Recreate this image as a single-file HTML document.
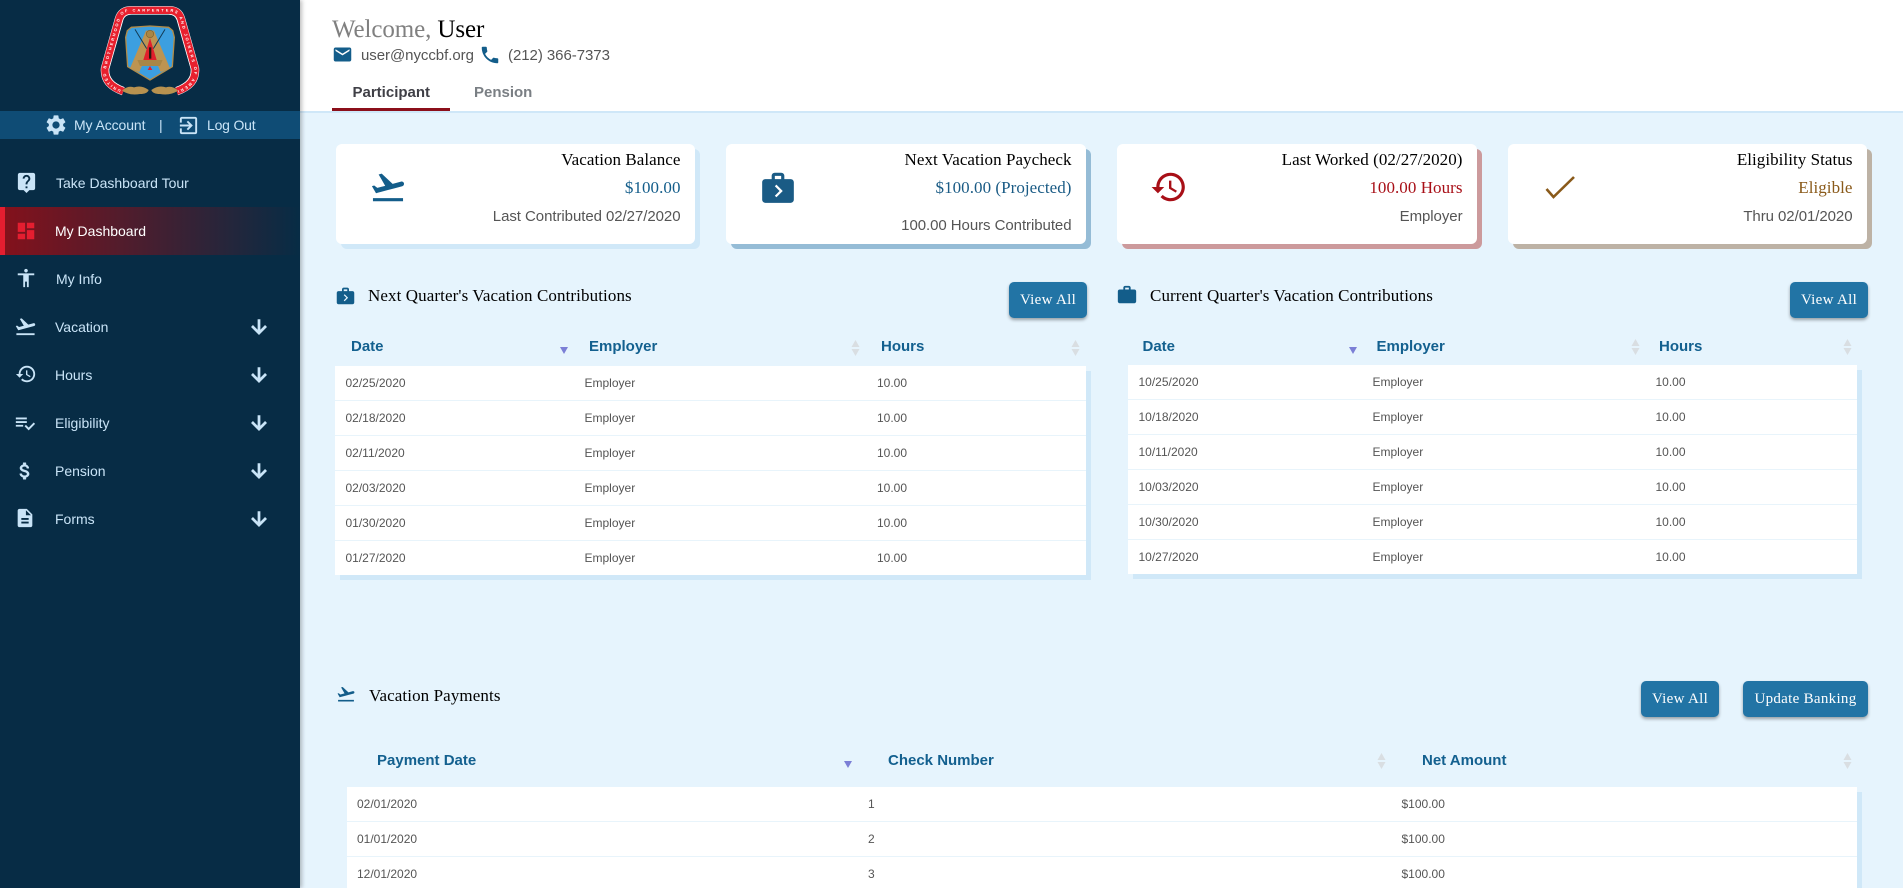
<!DOCTYPE html>
<html lang="en"><head><meta charset="utf-8"><title>Dashboard</title>
<style>
html,body{margin:0;padding:0;width:1903px;height:888px;overflow:hidden;background:#e6f4fd}
body{position:relative;font-family:"Liberation Sans",sans-serif}
.a,svg.i,.t,.r,.b,.th,.td{position:absolute}
svg.i{fill:currentColor;display:block}
.t{white-space:nowrap}
#side{position:absolute;left:0;top:0;width:300px;height:888px;background:#072c45;box-shadow:2px 0 4px rgba(0,0,0,.25);z-index:2}
.m{position:absolute;white-space:nowrap;font-size:14px;line-height:20px;color:#c9e4f7}
.s{color:#c9e4f7}
#head{position:absolute;left:300px;top:0;width:1603px;height:111px;background:#fff;border-bottom:2px solid #cfe7f8}
.card{position:absolute;top:144px;width:360px;height:100px;background:#fff;border-radius:6px}
.l1,.l2,.l3{position:absolute;right:14.5px;white-space:nowrap;line-height:20px}
.l1{top:6px;font:17px/20px "Liberation Serif",serif;letter-spacing:.05px;color:#000}
.l2{top:34px;font:17px/20px "Liberation Serif",serif;letter-spacing:.05px}
.l3{top:63px;font-size:15px;letter-spacing:-.06px;color:#555}
.sec{position:absolute;white-space:nowrap;font:17px/20px "Liberation Serif",serif;letter-spacing:.1px;color:#000}
.b{background:#2274a5;color:#fff;border-radius:5px;height:36px;line-height:36px;text-align:center;font:15px/36px "Liberation Serif",serif;letter-spacing:.3px;box-shadow:0 2px 3px rgba(0,0,0,.35)}
.th{white-space:nowrap;font-weight:700;font-size:15px;line-height:20px;color:#13608f}
.td{white-space:nowrap;font-size:12px;line-height:16px;color:#555}
.rowbox{position:absolute;background:#fff;box-shadow:5px 5px 0 #d0e8f8}
.ln{position:absolute;left:0;right:0;height:1px;background:#e8f4fb}
.so{position:absolute;width:9px;height:16px}
.de{position:absolute;width:0;height:0;border-left:4px solid transparent;border-right:4px solid transparent;border-top:7px solid #7b7fd6}
</style></head><body>

<div id="side">
<svg class="a" style="left:0;top:0" width="300" height="111" viewBox="0 0 900 333">
<defs><path id="ringp" d="M98 276 C60 262 40 240 44 205 L86 56 Q94 31 122 31 L238 31 Q266 31 274 56 L316 205 C320 240 300 262 262 276"/></defs>
<g transform="translate(270 0)">
<path d="M100 274 C62 260 42 240 45 205 L87 56 Q95 31 122 31 L238 31 Q265 31 273 56 L315 205 C318 240 298 260 260 274" fill="none" stroke="#fff" stroke-width="25"/>
<path d="M100 274 C62 260 42 240 45 205 L87 56 Q95 31 122 31 L238 31 Q265 31 273 56 L315 205 C318 240 298 260 260 274" fill="none" stroke="#e8202e" stroke-width="22"/>
<path d="M102 262 C72 250 55 234 57 207 L99 60 Q105 43 124 43 L236 43 Q255 43 261 60 L303 207 C305 234 288 250 258 262" fill="none" stroke="#fff" stroke-width="2"/>
<text font-family="Liberation Sans,sans-serif" font-size="12" font-weight="700" fill="#fff" dy="4"><textPath href="#ringp" startOffset="1%" textLength="735">UNITED BROTHERHOOD OF CARPENTERS AND JOINERS OF AMERICA</textPath></text>
<path d="M112 92 L124 82 L180 78 L236 82 L248 92 L253 112 L247 200 L180 240 L113 200 L107 112Z" fill="#3c9fe0" stroke="#b28c48" stroke-width="4"/>
<path d="M168 92 L192 92 L240 205 L212 216 L180 142 L148 216 L120 205Z" fill="#bd9452"/>
<path d="M135 88 L170 146M225 88 L190 146" stroke="#123a55" stroke-width="3"/>
<circle cx="180" cy="102" r="11" fill="#a98646" stroke="#7c6230" stroke-width="2"/>
<path d="M180 114 L200 180 L160 180Z" fill="#e01f2c"/>
<path d="M177 142 H184 V176 H177Z" fill="#2a1a10"/>
<path d="M142 180 L218 180 L210 198 L150 198Z" fill="#a98646"/>
<path d="M180 198 L187 210 L173 210Z" fill="#e01f2c"/>
<path d="M96 272 Q112 256 132 262 Q155 254 176 270 Q172 282 150 282 Q120 288 96 272ZM184 270 Q205 254 228 262 Q248 256 264 272 Q240 288 210 282 Q188 282 184 270Z" fill="#b8924f"/>
</g>
</svg>
<div class="a" style="left:0;top:111px;width:300px;height:28px;background:#0f4c75"></div>
<svg class="i s" style="left:44px;top:113px" width="24" height="24" viewBox="0 0 24 24"><path d="M19.14 12.94c.04-.3.06-.61.06-.94 0-.32-.02-.64-.07-.94l2.03-1.58c.18-.14.23-.41.12-.61l-1.92-3.32c-.12-.22-.37-.29-.59-.22l-2.39.96c-.5-.38-1.03-.7-1.62-.94l-.36-2.54c-.04-.24-.24-.41-.48-.41h-3.84c-.24 0-.43.17-.47.41l-.36 2.54c-.59.24-1.13.57-1.62.94l-2.39-.96c-.22-.08-.47 0-.59.22L2.74 8.87c-.12.21-.08.47.12.61l2.03 1.58c-.05.3-.09.63-.09.94s.02.64.07.94l-2.03 1.58c-.18.14-.23.41-.12.61l1.92 3.32c.12.22.37.29.59.22l2.39-.96c.5.38 1.03.7 1.62.94l.36 2.54c.05.24.24.41.48.41h3.84c.24 0 .44-.17.47-.41l.36-2.54c.59-.24 1.13-.56 1.62-.94l2.39.96c.22.08.47 0 .59-.22l1.92-3.32c.12-.22.07-.47-.12-.61l-2.01-1.58zM12 15.6c-1.98 0-3.6-1.62-3.6-3.6s1.62-3.6 3.6-3.6 3.6 1.62 3.6 3.6-1.62 3.6-3.6 3.6z"/></svg>
<div class="m" style="left:74px;top:115px;letter-spacing:-.1px">My Account</div>
<div class="m" style="left:159px;top:115px">|</div>
<svg class="i s" style="left:177px;top:114px" width="23" height="23" viewBox="0 0 24 24"><path d="M10.09 15.59L11.5 17l5-5-5-5-1.41 1.41L12.67 11H3v2h9.67l-2.58 2.59zM19 3H5c-1.11 0-2 .9-2 2v4h2V5h14v14H5v-4H3v4c0 1.1.89 2 2 2h14c1.1 0 2-.9 2-2V5c0-1.1-.9-2-2-2z"/></svg>
<div class="m" style="left:207px;top:115px;letter-spacing:-.2px">Log Out</div>

<svg class="i s" style="left:15px;top:171px" width="23" height="23" viewBox="0 0 24 24"><path d="M19 2H5c-1.11 0-2 .9-2 2v14c0 1.1.89 2 2 2h4l3 3 3-3h4c1.1 0 2-.9 2-2V4c0-1.1-.9-2-2-2zm-6 16h-2v-2h2v2zm2.07-7.75l-.9.92C13.45 11.9 13 12.5 13 14h-2v-.5c0-1.1.45-2.1 1.17-2.83l1.24-1.26c.37-.36.59-.86.59-1.41 0-1.1-.9-2-2-2s-2 .9-2 2H8c0-2.21 1.79-4 4-4s4 1.79 4 4c0 .88-.36 1.68-.93 2.25z"/></svg>
<div class="m" style="left:56px;top:173px">Take Dashboard Tour</div>

<div class="a" style="left:0;top:207px;width:300px;height:48px;background:linear-gradient(90deg,#85111b,#072c45)"></div>
<div class="a" style="left:0;top:207px;width:5px;height:48px;background:#e41e30"></div>
<svg class="i" style="left:15px;top:220px;color:#e41e30" width="22" height="22" viewBox="0 0 24 24"><path d="M3 13h8V3H3v10zm0 8h8v-6H3v6zm10 0h8V11h-8v10zm0-18v6h8V3h-8z"/></svg>
<div class="m" style="left:55px;top:221px;color:#fff">My Dashboard</div>

<svg class="i s" style="left:15px;top:267px" width="22" height="22" viewBox="0 0 24 24"><path d="M12 2c1.1 0 2 .9 2 2s-.9 2-2 2-2-.9-2-2 .9-2 2-2zm9 7h-6v13h-2v-6h-2v6H9V9H3V7h18v2z"/></svg>
<div class="m" style="left:56px;top:269px">My Info</div>

<svg class="i s" style="left:14px;top:315px" width="23" height="23" viewBox="0 0 24 24"><path d="M2.5 19h19v2h-19zm19.57-9.36c-.21-.8-1.04-1.28-1.84-1.06L14.92 10l-6.9-6.43-1.93.51 4.14 7.17-4.97 1.33-1.97-1.54-1.45.39 1.82 3.16.77 1.33 1.6-.43 5.31-1.42 4.35-1.16L21 11.49c.81-.23 1.28-1.05 1.07-1.85z"/></svg>
<div class="m" style="left:55px;top:317px">Vacation</div>
<svg class="i s" style="left:248px;top:316px" width="22" height="22" viewBox="0 0 24 24"><path stroke="currentColor" stroke-width="1" d="M20 12l-1.41-1.41L13 16.17V4h-2v12.17l-5.58-5.59L4 12l8 8 8-8z"/></svg>

<svg class="i s" style="left:15px;top:363px" width="22" height="22" viewBox="0 0 24 24"><path d="M13 3c-4.97 0-9 4.03-9 9H1l3.89 3.89.07.14L9 12H6c0-3.87 3.13-7 7-7s7 3.13 7 7-3.13 7-7 7c-1.93 0-3.68-.79-4.94-2.06l-1.42 1.42C8.27 19.99 10.51 21 13 21c4.97 0 9-4.03 9-9s-4.03-9-9-9zm-1 5v5l4.28 2.54.72-1.21-3.5-2.08V8H12z"/></svg>
<div class="m" style="left:55px;top:365px">Hours</div>
<svg class="i s" style="left:248px;top:364px" width="22" height="22" viewBox="0 0 24 24"><path stroke="currentColor" stroke-width="1" d="M20 12l-1.41-1.41L13 16.17V4h-2v12.17l-5.58-5.59L4 12l8 8 8-8z"/></svg>

<svg class="i s" style="left:14px;top:412px" width="22" height="22" viewBox="0 0 24 24"><path d="M14 10H2v2h12v-2zm0-4H2v2h12V6zM2 16h8v-2H2v2zm19.5-4.5L23 13l-6.99 7-4.51-4.5L13 14l3.01 3 5.49-5.5z"/></svg>
<div class="m" style="left:55px;top:413px">Eligibility</div>
<svg class="i s" style="left:248px;top:412px" width="22" height="22" viewBox="0 0 24 24"><path stroke="currentColor" stroke-width="1" d="M20 12l-1.41-1.41L13 16.17V4h-2v12.17l-5.58-5.59L4 12l8 8 8-8z"/></svg>

<svg class="i s" style="left:14px;top:460px" width="22" height="22" viewBox="0 0 24 24"><path stroke="currentColor" stroke-width=".5" d="M11.8 10.9c-2.27-.59-3-1.2-3-2.15 0-1.09 1.01-1.85 2.7-1.85 1.78 0 2.44.85 2.5 2.1h2.21c-.07-1.72-1.12-3.3-3.21-3.81V3h-3v2.16c-1.94.42-3.5 1.68-3.5 3.61 0 2.31 1.91 3.46 4.7 4.13 2.5.6 3 1.48 3 2.41 0 .69-.49 1.79-2.7 1.79-2.06 0-2.87-.92-2.98-2.1h-2.2c.12 2.19 1.76 3.42 3.68 3.83V21h3v-2.15c1.95-.37 3.5-1.5 3.5-3.55 0-2.84-2.43-3.81-4.7-4.4z"/></svg>
<div class="m" style="left:55px;top:461px">Pension</div>
<svg class="i s" style="left:248px;top:460px" width="22" height="22" viewBox="0 0 24 24"><path stroke="currentColor" stroke-width="1" d="M20 12l-1.41-1.41L13 16.17V4h-2v12.17l-5.58-5.59L4 12l8 8 8-8z"/></svg>

<svg class="i s" style="left:14px;top:507px" width="22" height="22" viewBox="0 0 24 24"><path d="M14 2H6c-1.1 0-1.99.9-1.99 2L4 20c0 1.1.89 2 1.99 2H18c1.1 0 2-.9 2-2V8l-6-6zm2 16H8v-2h8v2zm0-4H8v-2h8v2zm-3-5V3.5L18.5 9H13z"/></svg>
<div class="m" style="left:55px;top:509px">Forms</div>
<svg class="i s" style="left:248px;top:508px" width="22" height="22" viewBox="0 0 24 24"><path stroke="currentColor" stroke-width="1" d="M20 12l-1.41-1.41L13 16.17V4h-2v12.17l-5.58-5.59L4 12l8 8 8-8z"/></svg>
</div>

<div id="head">
<div class="t" style="left:32px;top:15px;font:25px/30px 'Liberation Serif',serif;letter-spacing:-.1px;color:#808080">Welcome, <span style="color:#000">User</span></div>
<svg class="i" style="left:32px;top:43.5px;color:#135d8a" width="21" height="21" viewBox="0 0 24 24"><path d="M20 4H4c-1.1 0-1.99.9-1.99 2L2 18c0 1.1.9 2 2 2h16c1.1 0 2-.9 2-2V6c0-1.1-.9-2-2-2zm0 4l-8 5-8-5V6l8 5 8-5v2z"/></svg>
<div class="t" style="left:61px;top:46px;font-size:15px;line-height:20px;letter-spacing:-.05px;color:#555">user@nyccbf.org</div>
<svg class="i" style="left:178.5px;top:44px;color:#135d8a" width="22" height="22" viewBox="0 0 24 24"><path d="M6.62 10.79c1.44 2.83 3.76 5.14 6.59 6.59l2.2-2.2c.27-.27.67-.36 1.02-.24 1.12.37 2.33.57 3.57.57.55 0 1 .45 1 1V20c0 .55-.45 1-1 1-9.39 0-17-7.61-17-17 0-.55.45-1 1-1h3.5c.55 0 1 .45 1 1 0 1.25.2 2.45.57 3.57.11.35.03.74-.25 1.02l-2.2 2.2z"/></svg>
<div class="t" style="left:208px;top:46px;font-size:15px;line-height:20px;letter-spacing:-.05px;color:#555">(212) 366-7373</div>
<div class="t" style="left:52.5px;top:82.5px;font-weight:700;font-size:15px;line-height:20px;color:#3f3f46">Participant</div>
<div class="t" style="left:174px;top:82.5px;font-weight:700;font-size:15px;line-height:20px;color:#7a7f84">Pension</div>
<div class="a" style="left:32px;top:108px;width:118px;height:3px;background:#8b0f1a"></div>
</div>

<!-- cards -->
<div class="card" style="left:336px;width:359px;box-shadow:5px 5px 0 #d0e8f8">
<svg class="i" style="left:33px;top:24px;color:#135d8a" width="38" height="38" viewBox="0 0 24 24"><path d="M2.5 19h19v2h-19zm19.57-9.36c-.21-.8-1.04-1.28-1.84-1.06L14.92 10l-6.9-6.43-1.93.51 4.14 7.17-4.97 1.33-1.97-1.54-1.45.39 1.82 3.16.77 1.33 1.6-.43 5.31-1.42 4.35-1.16L21 11.49c.81-.23 1.28-1.05 1.07-1.85z"/></svg>
<div class="l1">Vacation Balance</div><div class="l2" style="color:#135d8a">$100.00</div><div class="l3">Last Contributed 02/27/2020</div>
</div>
<div class="card" style="left:726px;box-shadow:5px 5px 0 #95bcd6">
<svg class="i" style="left:33px;top:24px;color:#1a5b85" width="38" height="38" viewBox="0 0 24 24"><path d="M20 7h-4V5c0-.55-.22-1.05-.59-1.41C15.05 3.22 14.55 3 14 3h-4c-1.1 0-2 .9-2 2v2H4c-1.1 0-2 .9-2 2v11c0 1.1.9 2 2 2h16c1.1 0 2-.9 2-2V9c0-1.1-.9-2-2-2zM10 5h4v2h-4V5zm1 13.5l-1-1 3-3-3-3 1-1 4 4-4 4z"/></svg>
<div class="l1">Next Vacation Paycheck</div><div class="l2" style="color:#1a5b85">$100.00 (Projected)</div><div class="l3" style="top:72px">100.00 Hours Contributed</div>
</div>
<div class="card" style="left:1117px;box-shadow:5px 5px 0 #cc9a9c">
<svg class="i" style="left:33px;top:24px;color:#a80f17" width="38" height="38" viewBox="0 0 24 24"><path d="M13 3c-4.97 0-9 4.03-9 9H1l3.89 3.89.07.14L9 12H6c0-3.87 3.13-7 7-7s7 3.13 7 7-3.13 7-7 7c-1.93 0-3.68-.79-4.94-2.06l-1.42 1.42C8.27 19.99 10.51 21 13 21c4.97 0 9-4.03 9-9s-4.03-9-9-9zm-1 5v5l4.28 2.54.72-1.21-3.5-2.08V8H12z"/></svg>
<div class="l1">Last Worked (02/27/2020)</div><div class="l2" style="color:#a80f17">100.00 Hours</div><div class="l3">Employer</div>
</div>
<div class="card" style="left:1508px;width:359px;box-shadow:5px 5px 0 #bdb2a5">
<svg class="a" style="left:36px;top:30px" width="32" height="26" viewBox="0 0 32 26"><path d="M2.5 15 L9.5 23 L30 3" fill="none" stroke="#8a5a1a" stroke-width="2.6"/></svg>
<div class="l1">Eligibility Status</div><div class="l2" style="color:#8a5a1a">Eligible</div><div class="l3">Thru 02/01/2020</div>
</div>

<!-- next quarter -->
<svg class="i" style="left:335px;top:285px;color:#135d8a" width="21" height="21" viewBox="0 0 24 24"><path d="M20 7h-4V5c0-.55-.22-1.05-.59-1.41C15.05 3.22 14.55 3 14 3h-4c-1.1 0-2 .9-2 2v2H4c-1.1 0-2 .9-2 2v11c0 1.1.9 2 2 2h16c1.1 0 2-.9 2-2V9c0-1.1-.9-2-2-2zM10 5h4v2h-4V5zm1 13.5l-1-1 3-3-3-3 1-1 4 4-4 4z"/></svg>
<div class="sec" style="left:368px;top:286px">Next Quarter's Vacation Contributions</div>
<div class="b" style="left:1009px;top:282px;width:78px">View All</div>
<div class="th" style="left:351px;top:337px">Date</div>
<div class="de" style="left:560px;top:347px"></div>
<div class="th" style="left:589px;top:337px">Employer</div>
<svg class="so" style="left:851px;top:340px" viewBox="0 0 9 16"><path d="M4.5 0L8.5 7H.5zM.5 9H8.5L4.5 16z" fill="#d9dee2"/></svg>
<div class="th" style="left:881px;top:337px">Hours</div>
<svg class="so" style="left:1071px;top:340px" viewBox="0 0 9 16"><path d="M4.5 0L8.5 7H.5zM.5 9H8.5L4.5 16z" fill="#d9dee2"/></svg>
<div class="rowbox" style="left:335px;top:366px;width:751px;height:209px">
<div class="ln" style="top:34px"></div><div class="ln" style="top:69px"></div><div class="ln" style="top:104px"></div><div class="ln" style="top:139px"></div><div class="ln" style="top:174px"></div>
<div class="td" style="left:10.5px;top:9px">02/25/2020</div><div class="td" style="left:249.5px;top:9px">Employer</div><div class="td" style="left:542px;top:9px">10.00</div>
<div class="td" style="left:10.5px;top:44px">02/18/2020</div><div class="td" style="left:249.5px;top:44px">Employer</div><div class="td" style="left:542px;top:44px">10.00</div>
<div class="td" style="left:10.5px;top:79px">02/11/2020</div><div class="td" style="left:249.5px;top:79px">Employer</div><div class="td" style="left:542px;top:79px">10.00</div>
<div class="td" style="left:10.5px;top:114px">02/03/2020</div><div class="td" style="left:249.5px;top:114px">Employer</div><div class="td" style="left:542px;top:114px">10.00</div>
<div class="td" style="left:10.5px;top:149px">01/30/2020</div><div class="td" style="left:249.5px;top:149px">Employer</div><div class="td" style="left:542px;top:149px">10.00</div>
<div class="td" style="left:10.5px;top:184px">01/27/2020</div><div class="td" style="left:249.5px;top:184px">Employer</div><div class="td" style="left:542px;top:184px">10.00</div>
</div>

<!-- current quarter -->
<svg class="i" style="left:1116px;top:284px;color:#135d8a" width="22" height="22" viewBox="0 0 24 24"><path d="M20 6h-4V4c0-1.11-.89-2-2-2h-4c-1.11 0-2 .89-2 2v2H4c-1.11 0-2 .89-2 2v11c0 1.11.89 2 2 2h16c1.11 0 2-.89 2-2V8c0-1.11-.89-2-2-2zm-6 0h-4V4h4v2z"/></svg>
<div class="sec" style="left:1150px;top:286px">Current Quarter's Vacation Contributions</div>
<div class="b" style="left:1790px;top:282px;width:78px">View All</div>
<div class="th" style="left:1142.5px;top:336.5px">Date</div>
<div class="de" style="left:1349px;top:347px"></div>
<div class="th" style="left:1376.5px;top:336.5px">Employer</div>
<svg class="so" style="left:1631px;top:339px" viewBox="0 0 9 16"><path d="M4.5 0L8.5 7H.5zM.5 9H8.5L4.5 16z" fill="#d9dee2"/></svg>
<div class="th" style="left:1659px;top:336.5px">Hours</div>
<svg class="so" style="left:1843px;top:339px" viewBox="0 0 9 16"><path d="M4.5 0L8.5 7H.5zM.5 9H8.5L4.5 16z" fill="#d9dee2"/></svg>
<div class="rowbox" style="left:1128px;top:365px;width:729px;height:209px">
<div class="ln" style="top:34px"></div><div class="ln" style="top:69px"></div><div class="ln" style="top:104px"></div><div class="ln" style="top:139px"></div><div class="ln" style="top:174px"></div>
<div class="td" style="left:10.5px;top:9px">10/25/2020</div><div class="td" style="left:244.5px;top:9px">Employer</div><div class="td" style="left:527.5px;top:9px">10.00</div>
<div class="td" style="left:10.5px;top:44px">10/18/2020</div><div class="td" style="left:244.5px;top:44px">Employer</div><div class="td" style="left:527.5px;top:44px">10.00</div>
<div class="td" style="left:10.5px;top:79px">10/11/2020</div><div class="td" style="left:244.5px;top:79px">Employer</div><div class="td" style="left:527.5px;top:79px">10.00</div>
<div class="td" style="left:10.5px;top:114px">10/03/2020</div><div class="td" style="left:244.5px;top:114px">Employer</div><div class="td" style="left:527.5px;top:114px">10.00</div>
<div class="td" style="left:10.5px;top:149px">10/30/2020</div><div class="td" style="left:244.5px;top:149px">Employer</div><div class="td" style="left:527.5px;top:149px">10.00</div>
<div class="td" style="left:10.5px;top:184px">10/27/2020</div><div class="td" style="left:244.5px;top:184px">Employer</div><div class="td" style="left:527.5px;top:184px">10.00</div>
</div>

<!-- payments -->
<svg class="i" style="left:336px;top:684px;color:#135d8a" width="20" height="20" viewBox="0 0 24 24"><path d="M2.5 19h19v2h-19zm19.57-9.36c-.21-.8-1.04-1.28-1.84-1.06L14.92 10l-6.9-6.43-1.93.51 4.14 7.17-4.97 1.33-1.97-1.54-1.45.39 1.82 3.16.77 1.33 1.6-.43 5.31-1.42 4.35-1.16L21 11.49c.81-.23 1.28-1.05 1.07-1.85z"/></svg>
<div class="sec" style="left:369px;top:685.5px">Vacation Payments</div>
<div class="b" style="left:1641px;top:681px;width:78px">View All</div>
<div class="b" style="left:1743px;top:681px;width:125px">Update Banking</div>
<div class="th" style="left:377px;top:750.5px">Payment Date</div>
<div class="de" style="left:844px;top:761px"></div>
<div class="th" style="left:888px;top:750.5px">Check Number</div>
<svg class="so" style="left:1377px;top:753px" viewBox="0 0 9 16"><path d="M4.5 0L8.5 7H.5zM.5 9H8.5L4.5 16z" fill="#d9dee2"/></svg>
<div class="th" style="left:1422px;top:750.5px">Net Amount</div>
<svg class="so" style="left:1843px;top:753px" viewBox="0 0 9 16"><path d="M4.5 0L8.5 7H.5zM.5 9H8.5L4.5 16z" fill="#d9dee2"/></svg>
<div class="rowbox" style="left:347px;top:787px;width:1510px;height:140px">
<div class="ln" style="top:34px"></div><div class="ln" style="top:69px"></div>
<div class="td" style="left:10px;top:9px">02/01/2020</div><div class="td" style="left:521px;top:9px">1</div><div class="td" style="left:1054.5px;top:9px">$100.00</div>
<div class="td" style="left:10px;top:44px">01/01/2020</div><div class="td" style="left:521px;top:44px">2</div><div class="td" style="left:1054.5px;top:44px">$100.00</div>
<div class="td" style="left:10px;top:79px">12/01/2020</div><div class="td" style="left:521px;top:79px">3</div><div class="td" style="left:1054.5px;top:79px">$100.00</div>
</div>

</body></html>
